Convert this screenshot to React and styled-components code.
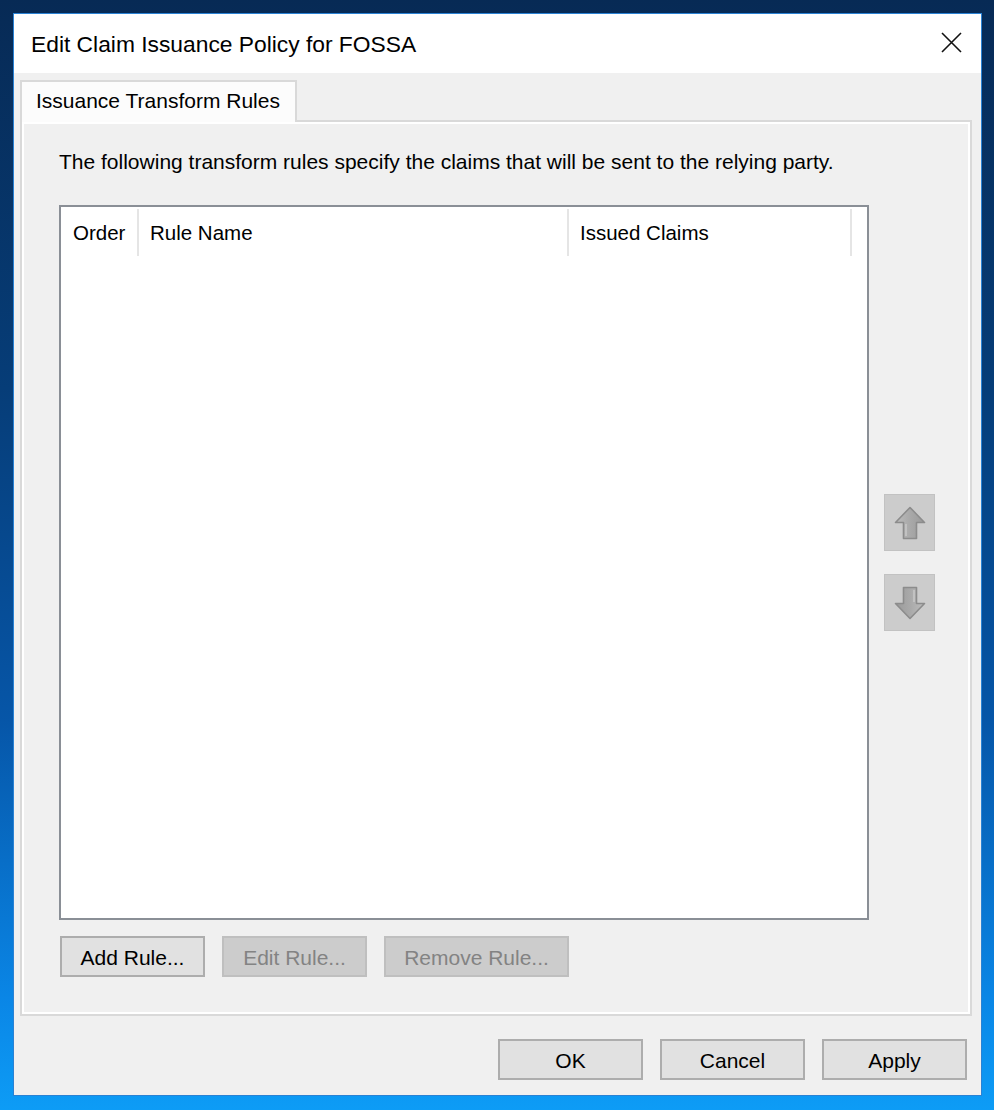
import React from "react";
import styled, { createGlobalStyle } from "styled-components";

const GlobalStyle = createGlobalStyle`
    html, body {
        margin: 0;
        padding: 0;
    }
    body {
        font-family: "Liberation Sans", Arial, sans-serif;
        background: linear-gradient(180deg, #072a55 0%, #063d78 35%, #0656a8 65%, #0a86e6 90%, #0d9cf6 100%);
        min-height: 1110px;
    }
`

const Desktop = styled.div`
    padding: 13px 12px 14px 13px;
    height: 1110px;
    box-sizing: border-box;
`

const Window = styled.div`
    width: 969px;
    height: 1083px;
    box-sizing: border-box;
    border: 1px solid #2a82d4;
    background: #f0f0f0;
    display: flex;
    flex-direction: column;
`

const TitleBar = styled.div`
    height: 59px;
    background: #ffffff;
    display: flex;
    align-items: center;
    justify-content: space-between;
    padding: 0 18px 0 17px;
    flex-shrink: 0;
`

const TitleText = styled.span`
    font-size: 22.8px;
    color: #000;
    margin-top: 1px;
`

const CloseButton = styled.div`
    width: 24px;
    height: 24px;
    display: flex;
    align-items: center;
    justify-content: center;
    margin-top: -2px;
`

const Body = styled.div`
    padding: 7px 9px 0 6px;
    display: flex;
    flex-direction: column;
`

const TabStrip = styled.div`
    display: flex;
    position: relative;
    z-index: 1;
    margin-bottom: -2px;
`

const Tab = styled.div`
    width: 277px;
    height: 42px;
    box-sizing: border-box;
    border: 2px solid #d9d9d9;
    border-bottom: none;
    background: #fcfcfc;
    font-size: 21px;
    color: #000;
    padding: 7px 0 0 14px;
`

const Panel = styled.div`
    height: 896px;
    box-sizing: border-box;
    border: 2px solid #d9d9d9;
    box-shadow: inset 0 0 0 2px #ffffff;
    padding: 28px 0 0 37px;
`

const Description = styled.p`
    margin: 0 0 31px;
    font-size: 21px;
    line-height: 24px;
    color: #000;
`

const ListRow = styled.div`
    display: flex;
    align-items: center;
    gap: 15px;
`

const ListView = styled.div`
    width: 810px;
    height: 715px;
    box-sizing: border-box;
    border: 2px solid #8a8f96;
    background: #ffffff;
`

const Header = styled.div`
    display: flex;
    height: 49px;
    padding-top: 2px;
    box-sizing: border-box;
`

const HeaderCell = styled.div`
    width: ${p => p.w}px;
    box-sizing: border-box;
    border-right: 2px solid #e5e5e5;
    padding: 12px 0 0 ${p => p.pad}px;
    font-size: 20.5px;
    color: #000;
    white-space: nowrap;
    overflow: hidden;
`

const SideButtons = styled.div`
    display: flex;
    flex-direction: column;
    gap: 23px;
`

const MoveButton = styled.div`
    width: 51px;
    height: 57px;
    box-sizing: border-box;
    background: #cccccc;
    border: 1px solid #c2c2c2;
    display: flex;
    align-items: center;
    justify-content: center;
`

const RuleButtons = styled.div`
    display: flex;
    gap: 17px;
    margin-top: 16px;
    padding-left: 1px;
`

const Button = styled.div`
    width: ${p => p.w || 145}px;
    height: 41px;
    box-sizing: border-box;
    border: 2px solid ${p => (p.disabled ? "#bfbfbf" : "#adadad")};
    background: ${p => (p.disabled ? "#cccccc" : "#e1e1e1")};
    color: ${p => (p.disabled ? "#838383" : "#000000")};
    font-size: 21px;
    display: flex;
    align-items: center;
    justify-content: center;
    padding-top: 3px;
`

const Footer = styled.div`
    display: flex;
    justify-content: flex-end;
    gap: 17px;
    padding: 23px 14px 0 0;
`

function Arrow({ down }) {
    return (
        <svg width="32" height="34" viewBox="0 0 32 34" style={{ transform: down ? "rotate(180deg)" : "none" }}>
            <defs>
                <linearGradient id={down ? "gd" : "gu"} x1="0" y1="0" x2="1" y2="0">
                    <stop offset="0" stopColor="#bdbdbd" />
                    <stop offset="0.5" stopColor="#a9a9a9" />
                    <stop offset="1" stopColor="#9a9a9a" />
                </linearGradient>
            </defs>
            <path
                d="M16 1.5 L30.5 16.5 L22.5 16.5 L22.5 32.5 L9.5 32.5 L9.5 16.5 L1.5 16.5 Z"
                fill={`url(#${down ? "gd" : "gu"})`}
                stroke="#8c8c8c"
                strokeWidth="1.6"
                strokeLinejoin="round"
            />
            <path d="M12 18 L12 30" stroke="#c8c8c8" strokeWidth="1.5" />
        </svg>
    )
}

export default function App() {
    return (
        <Desktop>
            <GlobalStyle />
            <Window>
                <TitleBar>
                    <TitleText>Edit Claim Issuance Policy for FOSSA</TitleText>
                    <CloseButton>
                        <svg width="21" height="21" viewBox="0 0 21 21">
                            <path d="M1 1 L20 20 M20 1 L1 20" stroke="#111" strokeWidth="1.6" />
                        </svg>
                    </CloseButton>
                </TitleBar>
                <Body>
                    <TabStrip>
                        <Tab>Issuance Transform Rules</Tab>
                    </TabStrip>
                    <Panel>
                        <Description>
                            The following transform rules specify the claims that will be sent to the relying party.
                        </Description>
                        <ListRow>
                            <ListView>
                                <Header>
                                    <HeaderCell w={78} pad={12}>Order</HeaderCell>
                                    <HeaderCell w={430} pad={11}>Rule Name</HeaderCell>
                                    <HeaderCell w={283} pad={11}>Issued Claims</HeaderCell>
                                </Header>
                            </ListView>
                            <SideButtons>
                                <MoveButton><Arrow /></MoveButton>
                                <MoveButton><Arrow down /></MoveButton>
                            </SideButtons>
                        </ListRow>
                        <RuleButtons>
                            <Button>Add Rule...</Button>
                            <Button disabled>Edit Rule...</Button>
                            <Button disabled w={185}>Remove Rule...</Button>
                        </RuleButtons>
                    </Panel>
                </Body>
                <Footer>
                    <Button>OK</Button>
                    <Button>Cancel</Button>
                    <Button>Apply</Button>
                </Footer>
            </Window>
        </Desktop>
    )
}
